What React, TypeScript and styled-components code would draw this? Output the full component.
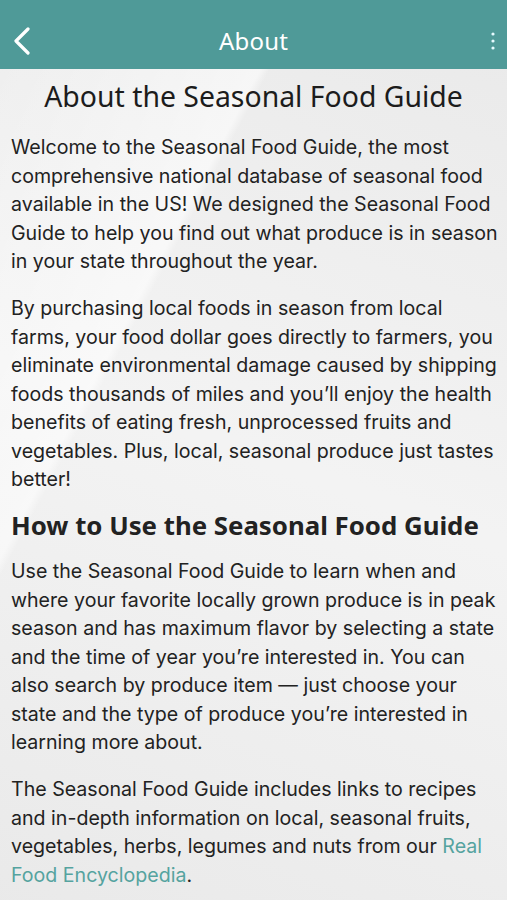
import styled, { createGlobalStyle } from "styled-components";

const GlobalStyle = createGlobalStyle`
  html, body {
    margin: 0;
    padding: 0;
    background: #efefef;
  }
  body {
    font-family: Inter, "Noto Sans", sans-serif;
    color: #222;
  }
`;

const Screen = styled.div`
  width: 507px;
  min-height: 900px;
  overflow: hidden;
  background:
    linear-gradient(118deg, rgba(255,255,255,0.0) 0%, rgba(255,255,255,0.55) 30%, rgba(255,255,255,0) 31%),
    linear-gradient(200deg, rgba(0,0,0,0.02) 0%, rgba(255,255,255,0.3) 50%, rgba(0,0,0,0.02) 100%),
    #eeeeee;
`;

const TopBar = styled.header`
  height: 69px;
  box-sizing: border-box;
  padding-top: 12px;
  background: #4f9a98;
  display: grid;
  grid-template-columns: 48px 1fr 48px;
  align-items: center;
  color: #fff;
`;

const IconButton = styled.button<{ $align: "start" | "end" }>`
  border: 0;
  background: none;
  padding: 0;
  height: 57px;
  display: flex;
  align-items: center;
  justify-content: ${(p) => (p.$align === "start" ? "flex-start" : "flex-end")};
  padding-left: ${(p) => (p.$align === "start" ? "12px" : "0")};
  padding-right: ${(p) => (p.$align === "end" ? "12px" : "0")};
  color: #fff;
`;

const Title = styled.h1`
  margin: 0;
  text-align: center;
  font-family: "Noto Sans", sans-serif;
  font-size: 24px;
  font-weight: 400;
  letter-spacing: 0.2px;
`;

const Content = styled.main`
  padding: 8px 5px 0 11px;
`;

const PageHeading = styled.h2`
  margin: 0 0 18px;
  padding-right: 6px;
  text-align: center;
  font-family: "Noto Sans", sans-serif;
  font-size: 28.4px;
  font-weight: 400;
  line-height: 38px;
  color: #1c1c1c;
`;

const SectionHeading = styled.h3`
  margin: 15px 0 19px;
  font-family: "Noto Sans", sans-serif;
  font-size: 25.8px;
  font-weight: 700;
  line-height: 26px;
  color: #222;
`;

const Paragraph = styled.p`
  margin: 0 0 18.5px;
  font-size: 19.6px;
  line-height: 28.5px;
  color: #222;
`;

const Link = styled.a`
  color: #55a39f;
  text-decoration: none;
`;

function BackIcon() {
  return (
    <svg width="20" height="28" viewBox="0 0 20 28" fill="none">
      <path d="M16 2 L4 14 L16 26" stroke="#fff" strokeWidth="3.2" strokeLinecap="round" strokeLinejoin="round" />
    </svg>
  );
}

function MoreIcon() {
  return (
    <svg width="4" height="18" viewBox="0 0 4 18">
      <circle cx="2" cy="2" r="1.6" fill="#e6fbff" />
      <circle cx="2" cy="9" r="1.6" fill="#e6fbff" />
      <circle cx="2" cy="16" r="1.6" fill="#e6fbff" />
    </svg>
  );
}

export default function App() {
  return (
    <Screen>
      <GlobalStyle />
      <TopBar>
        <IconButton $align="start" aria-label="Back">
          <BackIcon />
        </IconButton>
        <Title>About</Title>
        <IconButton $align="end" aria-label="More">
          <MoreIcon />
        </IconButton>
      </TopBar>
      <Content>
        <PageHeading>About the Seasonal Food Guide</PageHeading>
        <Paragraph>
          Welcome to the Seasonal Food Guide, the most comprehensive national database of seasonal food
          available in the US! We designed the Seasonal Food Guide to help you find out what produce is in
          season in your state throughout the year.
        </Paragraph>
        <Paragraph>
          By purchasing local foods in season from local farms, your food dollar goes directly to farmers,
          you eliminate environmental damage caused by shipping foods thousands of miles and you’ll enjoy
          the health benefits of eating fresh, unprocessed fruits and vegetables. Plus, local, seasonal
          produce just tastes better!
        </Paragraph>
        <SectionHeading>How to Use the Seasonal Food Guide</SectionHeading>
        <Paragraph>
          Use the Seasonal Food Guide to learn when and where your favorite locally grown produce is in
          peak season and has maximum flavor by selecting a state and the time of year you’re interested
          in. You can also search by produce item — just choose your state and the type of produce you’re
          interested in learning more about.
        </Paragraph>
        <Paragraph>
          The Seasonal Food Guide includes links to recipes and in-depth information on local, seasonal
          fruits, vegetables, herbs, legumes and nuts from our <Link href="#">Real Food Encyclopedia</Link>.
        </Paragraph>
      </Content>
    </Screen>
  );
}
